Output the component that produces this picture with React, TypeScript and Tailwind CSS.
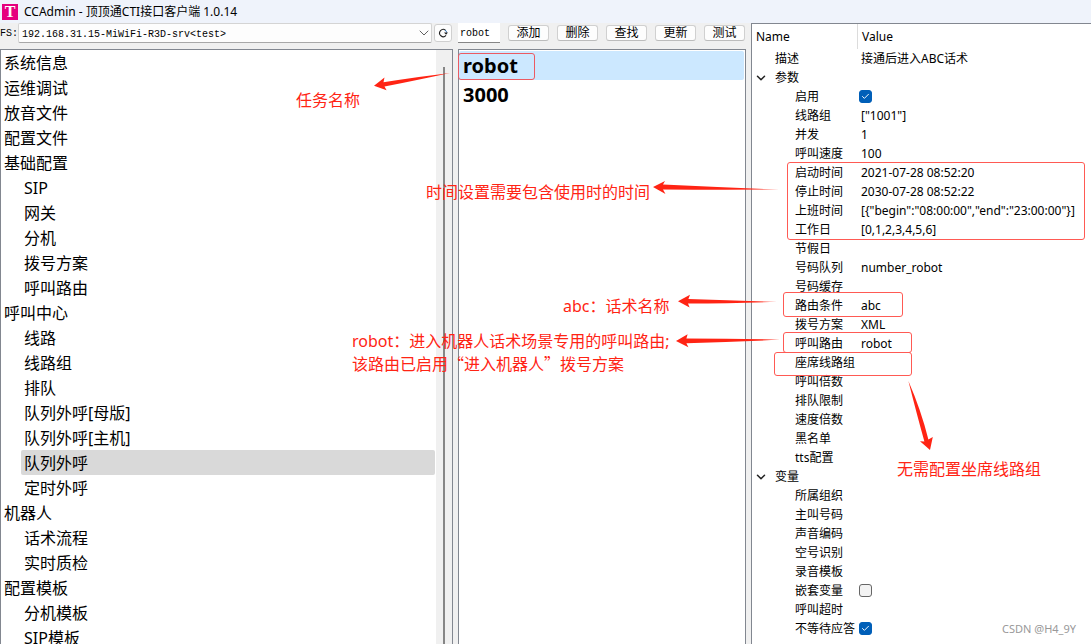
import { useState } from 'react';
import { Check, ChevronDown } from 'lucide-react';
import clsx from 'clsx';

type MenuItem = { label: string; child?: boolean };
type Prop = { name: string; value?: string; checked?: boolean };

const menu: MenuItem[] = [
  { label: '系统信息' },
  { label: '运维调试' },
  { label: '放音文件' },
  { label: '配置文件' },
  { label: '基础配置' },
  { label: 'SIP', child: true },
  { label: '网关', child: true },
  { label: '分机', child: true },
  { label: '拨号方案', child: true },
  { label: '呼叫路由', child: true },
  { label: '呼叫中心' },
  { label: '线路', child: true },
  { label: '线路组', child: true },
  { label: '排队', child: true },
  { label: '队列外呼[母版]', child: true },
  { label: '队列外呼[主机]', child: true },
  { label: '队列外呼', child: true },
  { label: '定时外呼', child: true },
  { label: '机器人' },
  { label: '话术流程', child: true },
  { label: '实时质检', child: true },
  { label: '配置模板' },
  { label: '分机模板', child: true },
  { label: 'SIP模板', child: true },
];

const params: Prop[] = [
  { name: '启用', checked: true },
  { name: '线路组', value: '["1001"]' },
  { name: '并发', value: '1' },
  { name: '呼叫速度', value: '100' },
  { name: '启动时间', value: '2021-07-28 08:52:20' },
  { name: '停止时间', value: '2030-07-28 08:52:22' },
  { name: '上班时间', value: '[{"begin":"08:00:00","end":"23:00:00"}]' },
  { name: '工作日', value: '[0,1,2,3,4,5,6]' },
  { name: '节假日' },
  { name: '号码队列', value: 'number_robot' },
  { name: '号码缓存' },
  { name: '路由条件', value: 'abc' },
  { name: '拨号方案', value: 'XML' },
  { name: '呼叫路由', value: 'robot' },
  { name: '座席线路组' },
  { name: '呼叫倍数' },
  { name: '排队限制' },
  { name: '速度倍数' },
  { name: '黑名单' },
  { name: 'tts配置' },
];

const variables: Prop[] = [
  { name: '所属组织' },
  { name: '主叫号码' },
  { name: '声音编码' },
  { name: '空号识别' },
  { name: '录音模板' },
  { name: '嵌套变量', checked: false },
  { name: '呼叫超时' },
  { name: '不等待应答', checked: true },
];

const actions = ['添加', '删除', '查找', '更新', '测试'];

const TitleBar = () => (
  <header className="flex h-[23px] shrink-0 items-center gap-1.5 bg-[#eff3fb] pl-0.5 text-xs">
    <span className="flex size-4 items-center justify-center bg-[#e6007e] font-['Liberation_Serif',serif] text-base leading-4 font-bold text-white">
      T
    </span>
    <h1>CCAdmin - 顶顶通CTI接口客户端 1.0.14</h1>
  </header>
);

const MenuPanel = () => {
  const [selected, setSelected] = useState('队列外呼');

  return (
    <section className="flex min-h-0 min-w-0 flex-col">
      <div className="flex h-[26px] shrink-0 items-start font-['Liberation_Mono','Noto_Sans_CJK_SC',monospace] text-[10px]">
        <label htmlFor="server" className="w-[18px] leading-[22px]">
          FS:
        </label>
        <div className="relative min-w-0 flex-1">
          <select
            id="server"
            className="h-5 w-full appearance-none rounded-xs border border-[#d4d4d4] border-b-[#a8a8a8] bg-[#fdfdfd] pt-0.5 pl-[3px]"
          >
            <option>192.168.31.15-MiWiFi-R3D-srv&lt;test&gt;</option>
          </select>
          <ChevronDown className="pointer-events-none absolute top-0.5 right-0 size-4 text-[#555]" strokeWidth={1.4} />
        </div>
        <button
          type="button"
          aria-label="刷新"
          className="mr-px ml-0.5 mt-px flex h-[18px] w-[18px] items-center justify-center rounded-[3px] border border-[#d0d0d0] bg-[#fdfdfd]"
        >
          <svg viewBox="0 0 10 10" className="size-2.5" fill="none">
            <path d="M7.6 2.3A3.6 3.6 0 1 0 8 7.4" stroke="#222" strokeWidth="1.1" />
            <path d="M8.6 4.6 A3.6 3.6 0 0 0 7 1.9" stroke="#2b6cb0" strokeWidth="1" />
            <path d="M6 4.4h4L8.1 6.8z" fill="#222" />
          </svg>
        </button>
      </div>

      <div className="flex min-h-0 flex-1 border border-b-0 border-[#828790] bg-white">
        <ul className="min-w-0 flex-1 overflow-hidden text-base">
          {menu.map((item) => (
            <li key={item.label + (item.child ? '-c' : '')} className={clsx('pr-px', item.child && 'pl-5')}>
              <button
                type="button"
                onClick={() => setSelected(item.label)}
                className={clsx(
                  'block h-[25px] w-full rounded-xs pl-[3px] text-left leading-[27px]',
                  selected === item.label && 'bg-[#d9d9d9]'
                )}
              >
                {item.label}
              </button>
            </li>
          ))}
        </ul>
        <div className="flex w-4 justify-center bg-[#f0f0f0] pt-[17px]">
          <div className="w-0.5 bg-[#868686]" />
        </div>
      </div>
    </section>
  );
};

const TaskPanel = () => {
  const [task, setTask] = useState('robot');

  return (
    <section className="flex min-h-0 min-w-0 flex-col">
      <div className="flex h-[26px] shrink-0 items-start gap-2 pr-px">
        <input
          aria-label="任务"
          defaultValue="robot"
          className="h-5 min-w-0 flex-1 border-b border-[#868686] bg-white px-0.5 pt-0.5 font-['Liberation_Mono',monospace] text-[10px] outline-none"
        />
        {actions.map((label) => (
          <button
            key={label}
            type="button"
            className="mt-0.5 h-4 w-[41px] rounded-[3px] border border-[#d0d0d0] border-b-[#bcbcbc] bg-[#fdfdfd] text-xs leading-[14px]"
          >
            {label}
          </button>
        ))}
      </div>

      <ul className="min-h-0 flex-1 border border-b-0 border-[#828790] bg-white pt-px pr-px text-xl font-bold">
        {['robot', '3000'].map((name) => (
          <li key={name}>
            <button
              type="button"
              onClick={() => setTask(name)}
              className={clsx('block h-[29px] w-full rounded-xs pl-1 text-left leading-[29px]', task === name && 'bg-[#cce8ff]')}
            >
              {name}
            </button>
          </li>
        ))}
      </ul>
    </section>
  );
};

const CheckCell = ({ id, defaultChecked }: { id: string; defaultChecked: boolean }) => (
  <span className="grid size-[13px] place-items-center">
    <input
      id={id}
      type="checkbox"
      defaultChecked={defaultChecked}
      className="peer col-start-1 row-start-1 size-[13px] appearance-none rounded-[3px] border border-[#666] bg-[#f3f3f3] checked:border-[#005fb8] checked:bg-[#005fb8]"
    />
    <Check
      className="pointer-events-none invisible col-start-1 row-start-1 size-[9px] text-white peer-checked:visible"
      strokeWidth={2.5}
    />
  </span>
);

const PropRow = ({ item }: { item: Prop }) => {
  const isCheck = item.checked !== undefined;

  return (
    <tr className="h-[19px]">
      <th scope="row" className="pl-[43px] text-left font-normal whitespace-nowrap">
        {isCheck ? <label htmlFor={item.name}>{item.name}</label> : item.name}
      </th>
      <td className={clsx('whitespace-nowrap', isCheck ? 'pl-px' : 'pl-[3px]')}>
        {isCheck ? <CheckCell id={item.name} defaultChecked={!!item.checked} /> : item.value}
      </td>
    </tr>
  );
};

const GroupRows = ({ title, items }: { title: string; items: Prop[] }) => {
  const [open, setOpen] = useState(true);

  return (
    <tbody>
      <tr className="h-[19px]">
        <th scope="rowgroup" colSpan={2} className="text-left font-normal">
          <button type="button" aria-expanded={open} onClick={() => setOpen(!open)} className="flex items-center gap-[7px] pl-0.5">
            <ChevronDown className={clsx('size-3.5 text-[#222]', !open && '-rotate-90')} strokeWidth={2.6} />
            {title}
          </button>
        </th>
      </tr>
      {open && items.map((item) => <PropRow key={item.name} item={item} />)}
    </tbody>
  );
};

const PropertyPanel = () => (
  <section className="min-h-0 min-w-0 overflow-hidden border-t border-l border-[#828790] bg-white">
    <table className="w-full table-fixed border-separate border-spacing-0 text-xs leading-[19px]">
      <thead>
        <tr className="h-[25px]">
          <th className="w-[106px] border-r border-[#dcdcdc] pl-1 text-left font-normal">Name</th>
          <th className="pl-1 text-left font-normal">Value</th>
        </tr>
      </thead>
      <tbody>
        <tr className="h-[19px]">
          <th scope="row" className="pl-[23px] text-left font-normal">
            描述
          </th>
          <td className="pl-[3px]">接通后进入ABC话术</td>
        </tr>
      </tbody>
      <GroupRows title="参数" items={params} />
      <GroupRows title="变量" items={variables} />
    </table>
  </section>
);

// Red call-outs drawn over the panels
const Annotations = () => (
  <div className="pointer-events-none absolute inset-0 text-base leading-[22px] whitespace-nowrap text-[#ff2414]">
    <div className="absolute top-[53px] left-[458px] h-[27px] w-[77px] rounded-[3px] border border-[#ec5a62]" />
    <div className="absolute top-[162px] left-[787px] h-[78px] w-[298px] rounded-[3px] border border-[#ff5a54]" />
    <div className="absolute top-[292px] left-[783px] h-[25px] w-[120px] rounded-[3px] border border-[#ff5a54]" />
    <div className="absolute top-[332px] left-[783px] h-[21px] w-[129px] rounded-[3px] border border-[#ff5a54]" />
    <div className="absolute top-[352px] left-[774px] h-[24px] w-[138px] rounded-[3px] border border-[#ff5a54]" />

    <svg className="absolute top-0 left-0" width="1091" height="644" fill="currentColor">
      <path d="M374 85.7 384.5 77.6 383.5 82.3 Q420 76.5 450 73 Q420 79.5 384.5 86.6 L386.6 90.2Z" />
      <path d="M653 187 665 181 663 184.6 Q720 187.4 779 189.5 Q720 190 663 189.4 L665.5 194Z" />
      <path d="M678 301.2 690 294.8 688.4 299 Q735 300.7 777 301.8 Q735 303.3 688 303.6 L689.6 307.5Z" />
      <path d="M676 341 687.6 334.2 686.4 338.6 Q735 338.8 780 339.6 Q735 342 686.4 343.2 L688.4 347.2Z" />
      <path d="M930 450 920 441.2 924.4 441.6 Q917 415 908.4 381 Q921 410 928.4 439.4 L932.8 437Z" />
    </svg>

    <p className="absolute top-[89px] left-[296px]">任务名称</p>
    <p className="absolute top-[181px] left-[426px]">时间设置需要包含使用时的时间</p>
    <p className="absolute top-[295px] left-[563px]">abc：话术名称</p>
    <p className="absolute top-[330px] left-[352px]">
      robot：进入机器人话术场景专用的呼叫路由;
      <br />
      <span className="font-['Noto_Sans_CJK_SC',sans-serif]">该路由已启用“进入机器人”拨号方案</span>
    </p>
    <p className="absolute top-[458px] left-[897px]">无需配置坐席线路组</p>
    <p className="absolute right-[15px] bottom-1 text-[11px] text-[#999]">CSDN @H4_9Y</p>
  </div>
);

const App = () => {
  return (
    <div
      lang="zh-CN"
      className="relative flex h-screen flex-col overflow-hidden bg-[#f0f0f0] font-['Noto_Sans','Noto_Sans_CJK_SC',sans-serif] text-black"
    >
      <TitleBar />
      <main className="grid min-h-0 flex-1 grid-cols-[453fr_288fr_340fr] gap-[5px]">
        <MenuPanel />
        <TaskPanel />
        <PropertyPanel />
      </main>
      <Annotations />
    </div>
  );
};

export default App;
